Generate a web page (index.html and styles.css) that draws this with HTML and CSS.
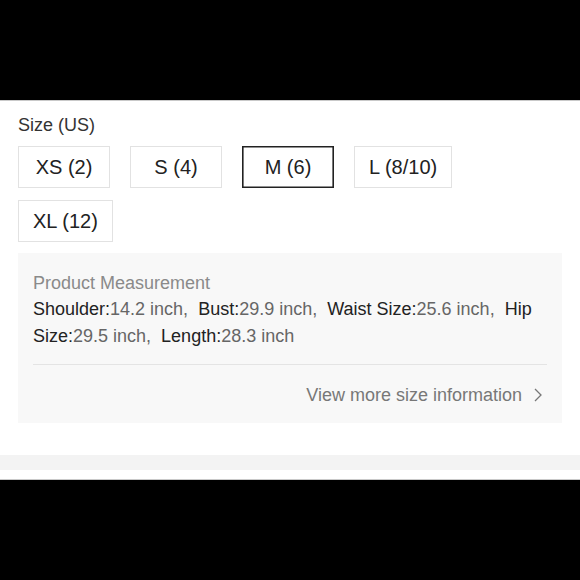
FILE: index.html
```html
<!DOCTYPE html>
<html lang="en">
<head>
  <meta charset="UTF-8" />
  <meta name="viewport" content="width=device-width, initial-scale=1.0">
  <title>Size (US)</title>
  <link rel="stylesheet" href="styles.css">
</head>
<body>
  <div class="letterbox top"></div>
  <main class="sheet">
    <section class="size-picker">
      <div class="size-label">Size (US)</div>
      <div class="size-options">
        <button class="size-btn">XS (2)</button>
        <button class="size-btn">S (4)</button>
        <button class="size-btn active">M (6)</button>
        <button class="size-btn">L (8/10)</button>
        <button class="size-btn">XL (12)</button>
      </div>
      <div class="measure-box">
        <div class="measure-title">Product Measurement</div>
        <p class="measure-list"><span class="key">Shoulder:</span><span class="val">14.2 inch, </span><span class="key">Bust:</span><span class="val">29.9 inch, </span><span class="key">Waist Size:</span><span class="val">25.6 inch, </span><span class="key">Hip Size:</span><span class="val">29.5 inch, </span><span class="key">Length:</span><span class="val">28.3 inch</span></p>
        <a class="more-link" href="#">
          <span>View more size information</span>
          <svg width="8" height="14" viewBox="0 0 8 14"><polyline points="1,1 7,7 1,13" fill="none" stroke="#777" stroke-width="1.3"/></svg>
        </a>
      </div>
    </section>
    <div class="band"></div>
  </main>
  <div class="letterbox bottom"></div>
</body>
</html>
```

FILE: styles.css
```css
body {
  margin: 0;
  background: #000;
  font-family: 'Liberation Sans', Arial, sans-serif;
  color: #222;
}
.letterbox {
  height: 100px;
  background: #000;
}
.letterbox.top {
  border-bottom: 1px solid #c9c9c9;
}
.letterbox.bottom {
  border-top: 1px solid #c9c9c9;
}
.sheet {
  background: #fff;
  height: 378px;
  box-sizing: border-box;
}
.size-picker {
  padding: 12px 18px 0 18px;
}
.size-label {
  font-size: 18px;
  line-height: 24px;
  color: #333;
  margin-bottom: 9px;
}
.size-options {
  display: flex;
  flex-wrap: wrap;
  gap: 12px 20px;
}
.size-btn {
  font-family: inherit;
  font-size: 20px;
  line-height: 40px;
  color: #222;
  background: #fff;
  border: 1px solid #e2e2e2;
  padding: 0 14px;
  min-width: 92px;
  box-sizing: border-box;
  border-radius: 0;
  text-align: center;
}
.size-btn.active {
  border-color: #222;
  box-shadow: inset 0 0 0 0.6px #222;
}
.measure-box {
  margin-top: 11px;
  background: #f8f8f8;
  padding: 17px 15px 16px 15px;
}
.measure-title {
  font-size: 18px;
  line-height: 26px;
  color: #8a8a8a;
}
.measure-list {
  margin: 0;
  font-size: 18px;
  line-height: 27px;
  color: #666;
  padding-bottom: 14px;
  border-bottom: 1px solid #e4e4e4;
}
.measure-list .val {
  margin-right: 5px;
}
.measure-list .key {
  color: #222;
}
.more-link {
  display: flex;
  justify-content: flex-end;
  align-items: center;
  gap: 12px;
  margin-top: 18px;
  padding-right: 5px;
  font-size: 18px;
  line-height: 24px;
  color: #777;
  text-decoration: none;
}
.band {
  margin-top: 32px;
  height: 15px;
  background: #f3f3f3;
}
```
